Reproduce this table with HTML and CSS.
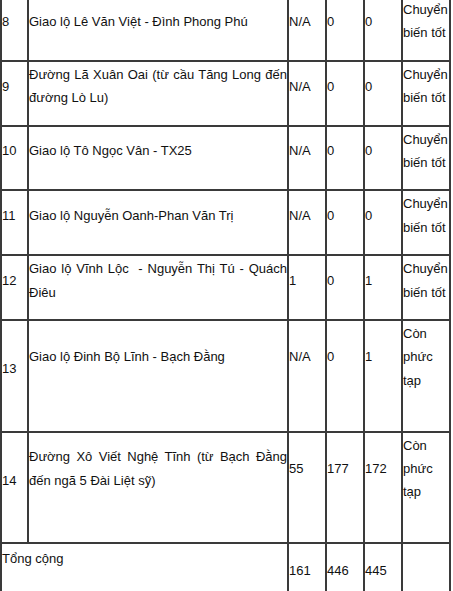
FILE: index.html
```html
<!DOCTYPE html>
<html lang="vi">
<head>
<meta charset="utf-8">
<title>Bảng tổng hợp</title>
<link rel="stylesheet" href="styles.css">
</head>
<body>
<table class="report">
  <colgroup>
    <col class="c-num">
    <col class="c-name">
    <col class="c-val">
    <col class="c-val">
    <col class="c-val">
    <col class="c-status">
  </colgroup>
  <tbody>
    <tr>
      <td class="num"><p>8</p></td>
      <td class="name"><p>Giao lộ Lê Văn Việt - Đình Phong Phú</p></td>
      <td><p>N/A</p></td>
      <td><p>0</p></td>
      <td><p>0</p></td>
      <td class="status"><p>Chuyển biến tốt</p></td>
    </tr>
    <tr>
      <td class="num"><p>9</p></td>
      <td class="name"><p>Đường Lã Xuân Oai (từ cầu Tăng Long đến đường Lò Lu)</p></td>
      <td><p>N/A</p></td>
      <td><p>0</p></td>
      <td><p>0</p></td>
      <td class="status"><p>Chuyển biến tốt</p></td>
    </tr>
    <tr>
      <td class="num"><p>10</p></td>
      <td class="name"><p>Giao lộ Tô Ngọc Vân - TX25</p></td>
      <td><p>N/A</p></td>
      <td><p>0</p></td>
      <td><p>0</p></td>
      <td class="status"><p>Chuyển biến tốt</p></td>
    </tr>
    <tr>
      <td class="num"><p>11</p></td>
      <td class="name"><p>Giao lộ Nguyễn Oanh-Phan Văn Trị</p></td>
      <td><p>N/A</p></td>
      <td><p>0</p></td>
      <td><p>0</p></td>
      <td class="status"><p>Chuyển biến tốt</p></td>
    </tr>
    <tr>
      <td class="num"><p>12</p></td>
      <td class="name"><p>Giao lộ Vĩnh Lộc&nbsp; - Nguyễn Thị Tú - Quách Điêu</p></td>
      <td><p>1</p></td>
      <td><p>0</p></td>
      <td><p>1</p></td>
      <td class="status"><p>Chuyển biến tốt</p></td>
    </tr>
    <tr class="tall">
      <td class="num"><p>13</p></td>
      <td class="name"><p>Giao lộ Đinh Bộ Lĩnh - Bạch Đằng</p></td>
      <td><p>N/A</p></td>
      <td><p>0</p></td>
      <td><p>1</p></td>
      <td class="status"><p>Còn phức tạp</p></td>
    </tr>
    <tr class="tall">
      <td class="num"><p>14</p></td>
      <td class="name"><p>Đường Xô Viết Nghệ Tĩnh (từ Bạch Đằng đến ngã 5 Đài Liệt sỹ)</p></td>
      <td><p>55</p></td>
      <td><p>177</p></td>
      <td><p>172</p></td>
      <td class="status"><p>Còn phức tạp</p></td>
    </tr>
    <tr class="total">
      <td class="label" colspan="2"><p>Tổng cộng</p></td>
      <td><p>161</p></td>
      <td><p>446</p></td>
      <td><p>445</p></td>
      <td class="status"></td>
    </tr>
  </tbody>
</table>
</body>
</html>
```

FILE: styles.css
```css
html, body {
  margin: 0;
  padding: 0;
  background: #ffffff;
}

body {
  font-family: "Liberation Sans", Arial, sans-serif;
  font-size: 13px;
  line-height: 23.4px;
  color: #111111;
}

.report {
  table-layout: fixed;
  width: 451px;
  margin-top: -5px;
  border-collapse: separate;
  border-spacing: 0;
  border-top: 2px solid #3a3a3a;
  border-left: 2px solid #3a3a3a;
}

.c-num { width: 27px; }
.c-name { width: 260px; }
.c-val { width: 38px; }
.c-status { width: 48px; }

.report td {
  padding: 1px 0;
  border-right: 2px solid #3a3a3a;
  border-bottom: 2px solid #3a3a3a;
  vertical-align: middle;
  text-align: left;
}

.report p {
  margin: 0 0 14px 0;
}

.report .name p {
  text-align: justify;
}

.report .tall td:not(.num) p,
.report .total .label p {
  margin-bottom: 37.4px;
}

.report .total td {
  padding-top: 3px;
}
```
